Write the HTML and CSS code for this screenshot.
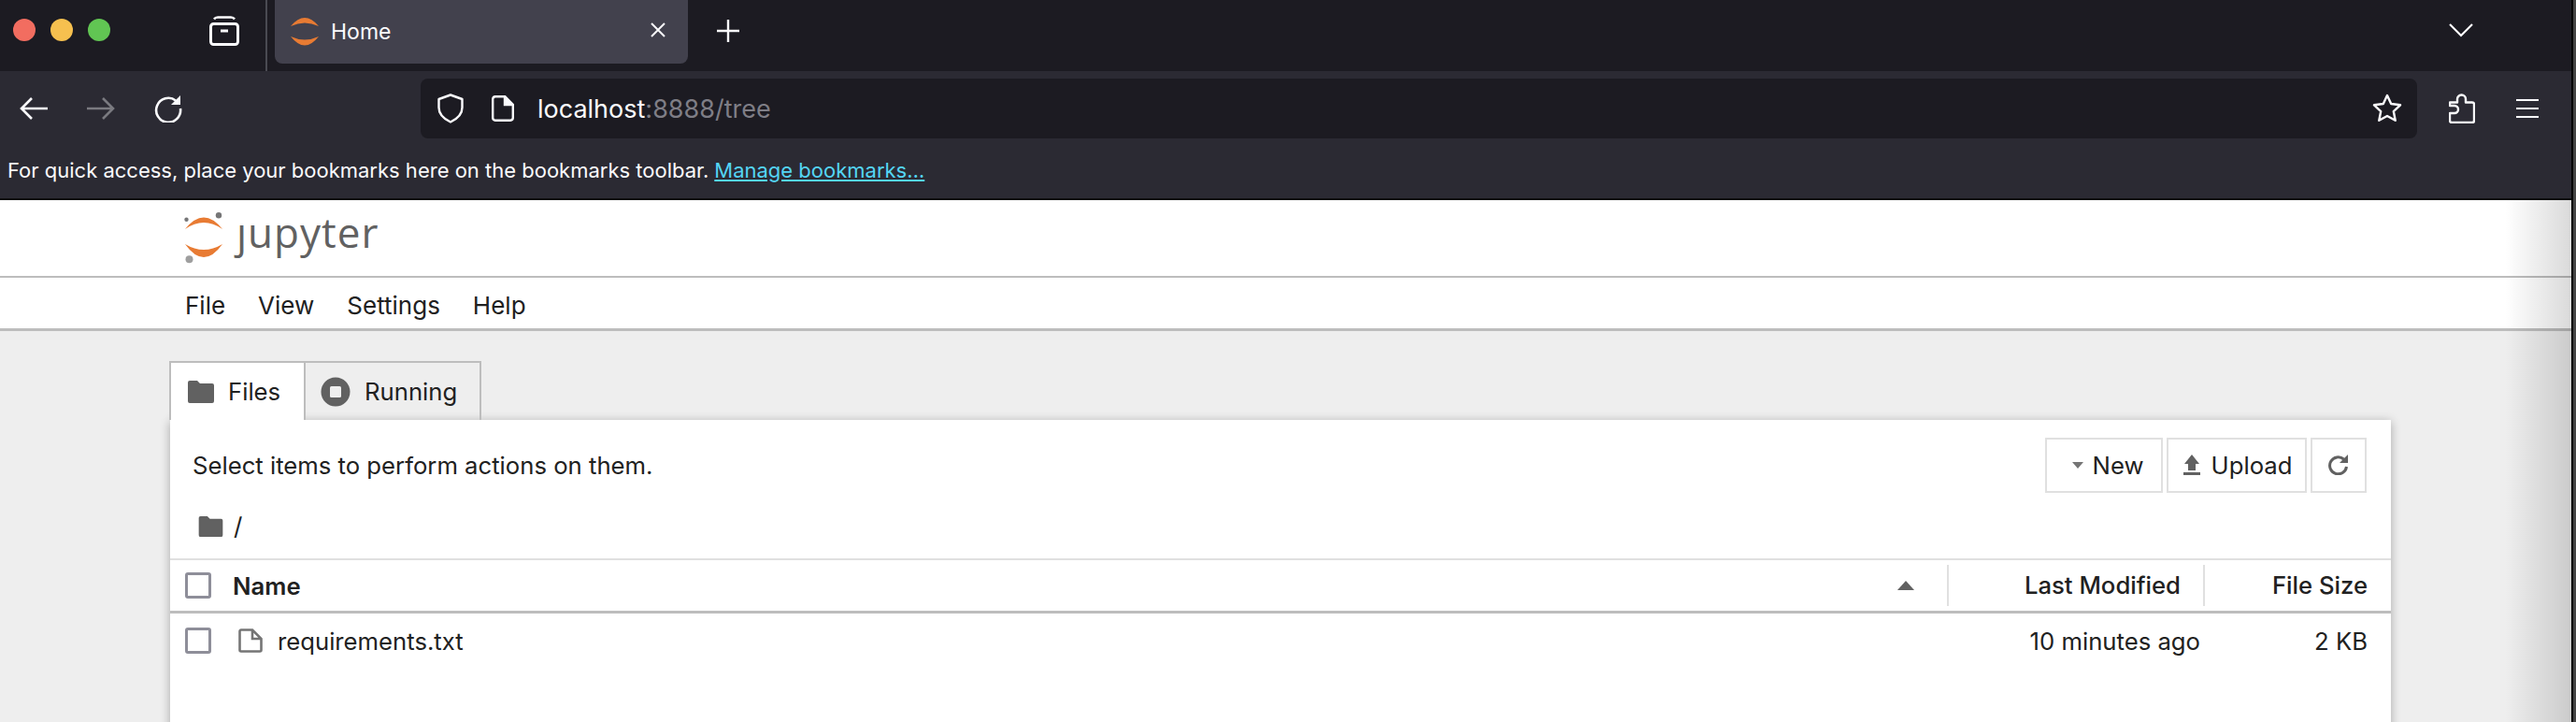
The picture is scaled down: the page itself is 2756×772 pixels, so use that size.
FILE: index.html
```html
<!DOCTYPE html>
<html lang="en">

<head>
    <meta charset="UTF-8">
    <title>Home</title>
    <link rel="stylesheet" href="styles.css">
</head>

<body>
    <div class="browser">
        <div class="tabstrip">
            <div class="traffic">
                <span class="light red"></span>
                <span class="light yellow"></span>
                <span class="light green"></span>
            </div>
            <svg class="view-icon" width="32" height="32" viewBox="0 0 32 32" fill="none" stroke="#fbfbfe" stroke-width="3">
                <path d="M5 3.500C6 2 8 1.500 9 1.500h14c1 0 3 .5 4 2" stroke-width="2.500"/>
                <rect x="1.500" y="8.500" width="29" height="22" rx="3"/>
                <path d="M12 16h8" stroke-width="3"/>
            </svg>
            <div class="tab-sep"></div>
            <div class="tab">
                <svg class="favicon" width="30" height="30" viewBox="0 0 30 30" fill="#e87b33">
                    <path d="M0 9Q15 -9 30 9Q15 2 0 9z"/>
                    <path d="M0 20Q15 39 30 20Q15 27 0 20z"/>
                </svg>
                <span class="tab-title">Home</span>
                <svg class="tab-close" width="16" height="16" viewBox="0 0 16 16" stroke="#fbfbfe" stroke-width="2" fill="none">
                    <path d="M1 1l14 14M15 1L1 15"/>
                </svg>
            </div>
            <svg class="new-tab" width="24" height="24" viewBox="0 0 24 24" stroke="#fbfbfe" stroke-width="2.400" fill="none">
                <path d="M12 0v24M0 12h24"/>
            </svg>
            <svg class="tab-list" width="26" height="16" viewBox="0 0 26 16" stroke="#fbfbfe" stroke-width="2.200" fill="none">
                <path d="M1 2l12 12L25 2"/>
            </svg>
        </div>

        <div class="navbar">
            <svg class="nav-btn" width="30" height="26" viewBox="0 0 30 26" stroke="#fbfbfe" stroke-width="2.600" fill="none">
                <path d="M30 13H3M13 2L2 13l11 11"/>
            </svg>
            <svg class="nav-btn" width="30" height="26" viewBox="0 0 30 26" stroke="#7a7a80" stroke-width="2.600" fill="none">
                <path d="M0 13h27M17 2l11 11-11 11"/>
            </svg>
            <svg class="nav-btn" width="30" height="30" viewBox="0 0 30 30" stroke="#fbfbfe" stroke-width="2.600" fill="none">
                <path d="M23 6.500A13 13 0 1 0 28 15"/>
                <path d="M28 1v10H18z" fill="#fbfbfe" stroke="none"/>
            </svg>
            <div class="urlbar">
                <svg class="shield" width="28" height="32" viewBox="0 0 28 32" stroke="#fbfbfe" stroke-width="2.400" fill="none">
                    <path d="M14 1.500L26.500 6v9c0 7-5 12-12.500 15.500C6.500 27 1.500 22 1.500 15V6z" stroke-linejoin="round"/>
                </svg>
                <svg class="page-icon" width="24" height="28" viewBox="0 0 24 28" stroke="#fbfbfe" stroke-width="2.400" fill="none">
                    <path d="M14 1.200H4A3 3 0 0 0 1.200 4v20A3 3 0 0 0 4 26.800h16a3 3 0 0 0 2.800-3V10z" stroke-linejoin="round"/>
                    <path d="M14 1.200L22.800 10H14z" fill="#fbfbfe"/>
                </svg>
                <span class="url"><span class="url-host">localhost</span><span class="url-rest">:8888/tree</span></span>
                <svg class="star" width="32" height="32" viewBox="0 0 32 32" stroke="#fbfbfe" stroke-width="2.400" fill="none">
                    <path d="M16 2l4.200 9 9.800 1.300-7.200 6.800 1.900 9.700L16 24l-8.700 4.800 1.900-9.700L2 12.300 11.800 11z" stroke-linejoin="round"/>
                </svg>
            </div>
            <svg class="puzzle" width="28" height="32" viewBox="0 0 28 32" stroke="#fbfbfe" stroke-width="2.400" fill="none">
                <path d="M9 9.500V6a4.500 4.500 0 0 1 9 0v3.500h7a2 2 0 0 1 2 2V29a2 2 0 0 1-2 2H3a2 2 0 0 1-2-2v-8h5a4 4 0 0 0 0-8H1V9.500z" stroke-linejoin="round"/>
            </svg>
            <div class="hamburger"><i></i><i></i><i></i></div>
        </div>

        <div class="bookmarks">
            <span>For quick access, place your bookmarks here on the bookmarks toolbar.</span>
            <a class="manage" href="#">Manage bookmarks…</a>
        </div>
    </div>

    <header class="top">
        <svg class="logo" width="42" height="56" viewBox="0 0 42 56">
            <path d="M1 18Q21 -7 41 18Q21 4 1 18z" fill="#e87b33"/>
            <path d="M1 34Q21 62 41 34Q21 46 1 34z" fill="#e87b33"/>
            <circle cx="37" cy="3.300" r="3.200" fill="#767677"/>
            <circle cx="2.500" cy="7.700" r="2.200" fill="#767677"/>
            <circle cx="5.500" cy="50.300" r="4" fill="#9e9e9e"/>
        </svg>
        <span class="wordmark">ȷupyter</span>
    </header>

    <nav class="menu">
        <span>File</span>
        <span>View</span>
        <span>Settings</span>
        <span>Help</span>
    </nav>

    <main class="content">
        <div class="tabs">
            <div class="nb-tab active">
                <svg width="28" height="24" viewBox="0 0 28 24" fill="#616161"><path d="M2 0h8l3 3h13a2 2 0 0 1 2 2v17a2 2 0 0 1-2 2H2a2 2 0 0 1-2-2V2a2 2 0 0 1 2-2z"/></svg>
                <span>Files</span>
            </div>
            <div class="nb-tab running">
                <svg width="32" height="32" viewBox="0 0 32 32"><circle cx="16" cy="16" r="15.500" fill="#616161"/><rect x="10" y="10" width="12" height="12" rx="1.500" fill="#eee"/></svg>
                <span>Running</span>
            </div>
        </div>

        <section class="panel">
            <div class="actions">
                <span class="hint">Select items to perform actions on them.</span>
                <div class="buttons">
                    <button class="btn btn-new"><svg width="12" height="7" viewBox="0 0 12 7" fill="#757575"><path d="M0 0h12L6 7z"/></svg>New</button>
                    <button class="btn btn-upload"><svg width="18" height="22" viewBox="0 0 18 22" fill="#616161"><path d="M9 0l8 10h-4v7H5v-7H1zM0 19h18v3H0z"/></svg>Upload</button>
                    <button class="btn btn-refresh"><svg width="22" height="22" viewBox="0 0 22 22" fill="none" stroke="#616161" stroke-width="3"><path d="M16.500 5A9 9 0 1 0 19.500 13"/><path d="M21 0v9h-9z" fill="#616161" stroke="none"/></svg></button>
                </div>
            </div>
            <div class="crumbs">
                <svg width="27" height="22" viewBox="0 0 28 24" fill="#616161"><path d="M2 0h8l3 3h13a2 2 0 0 1 2 2v17a2 2 0 0 1-2 2H2a2 2 0 0 1-2-2V2a2 2 0 0 1 2-2z"/></svg>
                <span>/</span>
            </div>
            <div class="row head">
                <span class="check"></span>
                <span class="col-name">Name</span>
                <svg class="sort" width="18" height="10" viewBox="0 0 18 10" fill="#616161"><path d="M9 0l9 10H0z"/></svg>
                <span class="col-date">Last Modified</span>
                <span class="col-size">File Size</span>
            </div>
            <div class="row item">
                <span class="check"></span>
                <svg class="file-icon" width="26" height="26" viewBox="0 0 26 26" fill="none" stroke="#757575" stroke-width="2.600"><path d="M15 1.500H3A1.500 1.500 0 0 0 1.500 3v20A1.500 1.500 0 0 0 3 24.500h20a1.500 1.500 0 0 0 1.500-1.500V11zM15 1.500V11h9.500"/></svg>
                <span class="file-name">requirements.txt</span>
                <span class="file-date">10 minutes ago</span>
                <span class="file-size">2 KB</span>
            </div>
        </section>
    </main>

    <div class="edge"></div>
    <div class="screen-border"></div>
</body>

</html>
```

FILE: styles.css
```css
html, body {
    margin: 0;
    height: 772px;
    overflow: hidden;
}

body {
    font-family: Inter, 'Liberation Sans', sans-serif;
    background-color: #eeeeee;
    color: #212121;
}

svg {
    display: block;
    flex: none;
}

/* browser chrome */
.browser {
    background-color: #2b2a33;
    border-bottom: 2px solid #0c0c0d;
    color: #fbfbfe;
}

.tabstrip {
    display: flex;
    align-items: flex-start;
    height: 76px;
    background-color: #1c1b22;
}

.traffic {
    display: flex;
    gap: 16px;
    padding: 20px 0 0 14px;
}

.light {
    width: 24px;
    height: 24px;
    border-radius: 50%;
}

.red { background-color: #f26d60; }
.yellow { background-color: #f6c04f; }
.green { background-color: #61c553; }

.view-icon {
    margin: 17px 0 0 106px;
}

.tab-sep {
    width: 2px;
    height: 76px;
    margin-left: 28px;
    background-color: #4a4a52;
}

.tab {
    display: flex;
    align-items: center;
    width: 442px;
    height: 68px;
    margin-left: 8px;
    padding: 0 24px 0 17px;
    box-sizing: border-box;
    background-color: #42414d;
    border-radius: 0 0 8px 8px;
}

.tab-title {
    flex: 1;
    margin-left: 13px;
    font-size: 23px;
}

.tab-close {
    margin-top: -4px;
}

.new-tab {
    margin: 21px 0 0 31px;
}

.tab-list {
    margin: 24px 0 0 1829px;
}

.navbar {
    display: flex;
    align-items: center;
    height: 80px;
    padding-left: 21px;
    gap: 42px;
}

.urlbar {
    display: flex;
    align-items: center;
    width: 2136px;
    height: 64px;
    margin-left: 213px;
    padding: 0 16px 0 18px;
    box-sizing: border-box;
    background-color: #1c1b22;
    border-radius: 8px;
}

.page-icon {
    margin-left: 30px;
}

.url {
    flex: 1;
    margin-left: 25px;
    font-size: 27px;
}

.url-rest {
    color: #7f7e86;
}

.puzzle {
    margin-left: -8px;
}

.hamburger {
    display: flex;
    flex-direction: column;
    gap: 7px;
    width: 24px;
    margin-left: 2px;
}

.hamburger i {
    height: 2px;
    background-color: #fbfbfe;
}

.bookmarks {
    display: flex;
    align-items: center;
    gap: 6px;
    height: 56px;
    padding: 0 0 4px 8px;
    box-sizing: border-box;
    font-size: 22px;
}

.manage {
    color: #54d5f5;
}

/* jupyter header */
.top {
    display: flex;
    align-items: center;
    height: 83px;
    padding-left: 197px;
    background-color: #ffffff;
    border-bottom: 2px solid #bdbdbd;
    box-sizing: border-box;
}

.wordmark {
    margin: -14px 0 0 14px;
    font-family: 'Open Sans', sans-serif;
    font-size: 44px;
    letter-spacing: 1px;
    color: #616161;
}

.menu {
    display: flex;
    align-items: center;
    gap: 35px;
    height: 57px;
    padding: 4px 0 0 198px;
    background-color: #ffffff;
    border-bottom: 3px solid #bdbdbd;
    box-sizing: border-box;
    font-size: 26px;
}

/* file browser */
.content {
    padding: 32px 198px 0 181px;
}

.tabs {
    display: flex;
    height: 63px;
}

.nb-tab {
    display: flex;
    align-items: center;
    gap: 15px;
    box-sizing: border-box;
    border: 2px solid #bdbdbd;
    border-bottom: 0;
    border-left: 0;
    font-size: 25.7px;
}

.nb-tab.active {
    width: 146px;
    padding-left: 18px;
    border-left: 2px solid #bdbdbd;
    background-color: #ffffff;
}

.nb-tab.running {
    width: 188px;
    padding-left: 16px;
}

.panel {
    height: 340px;
    margin-left: 1px;
    background-color: #ffffff;
    box-shadow: 0 2px 10px rgba(0, 0, 0, 0.3);
}

.actions {
    display: flex;
    align-items: center;
    justify-content: space-between;
    height: 97px;
    padding: 0 26px 0 24px;
    font-size: 25.7px;
}

.buttons {
    display: flex;
    gap: 4px;
    margin-top: -1px;
}

.btn {
    display: flex;
    align-items: center;
    justify-content: center;
    height: 59px;
    padding: 0;
    background-color: #ffffff;
    border: 2px solid #e0e0e0;
    font-family: inherit;
    font-size: 25.7px;
    color: #212121;
}

.btn-new { width: 126px; gap: 10px; padding-left: 8px; }
.btn-upload { width: 150px; gap: 12px; padding-left: 2px; }
.btn-refresh { width: 60px; }

.crumbs {
    display: flex;
    align-items: center;
    gap: 11px;
    height: 51px;
    padding: 0 0 18px 30px;
    box-sizing: border-box;
    font-size: 26px;
}

.row {
    display: flex;
    align-items: center;
    padding: 0 25px 0 16px;
    box-sizing: border-box;
}

.head {
    height: 59px;
    border-top: 2px solid #e0e0e0;
    border-bottom: 3px solid #bdbdbd;
    font-weight: 500;
    font-size: 25.7px;
}

.check {
    width: 28px;
    height: 28px;
    box-sizing: border-box;
    border: 3px solid #8e8e99;
    border-radius: 3px;
}

.col-name {
    flex: 1;
    margin-left: 23px;
    font-weight: 600;
}

.sort {
    margin-right: 35px;
}

.col-date {
    width: 274px;
    height: 44px;
    line-height: 44px;
    padding-right: 24px;
    box-sizing: border-box;
    text-align: right;
    border-left: 2px solid #e0e0e0;
}

.col-size {
    width: 174px;
    height: 44px;
    line-height: 44px;
    text-align: right;
    border-left: 2px solid #e0e0e0;
}

.item {
    height: 58px;
    font-size: 25.7px;
}

.file-icon {
    margin-left: 29px;
}

.file-name {
    flex: 1;
    margin-left: 16px;
}

.file-date {
    margin-right: 122px;
}

/* shadow of the next window along the right side */
.edge {
    position: absolute;
    top: 214px;
    right: 4px;
    bottom: 0;
    width: 72px;
    background: linear-gradient(to right, rgba(0, 0, 0, 0), rgba(0, 0, 0, 0.15));
}

.screen-border {
    position: absolute;
    top: 0;
    right: 0;
    bottom: 0;
    width: 3px;
    background-color: #444444;
    border-left: 2px solid #000000;
}
```
